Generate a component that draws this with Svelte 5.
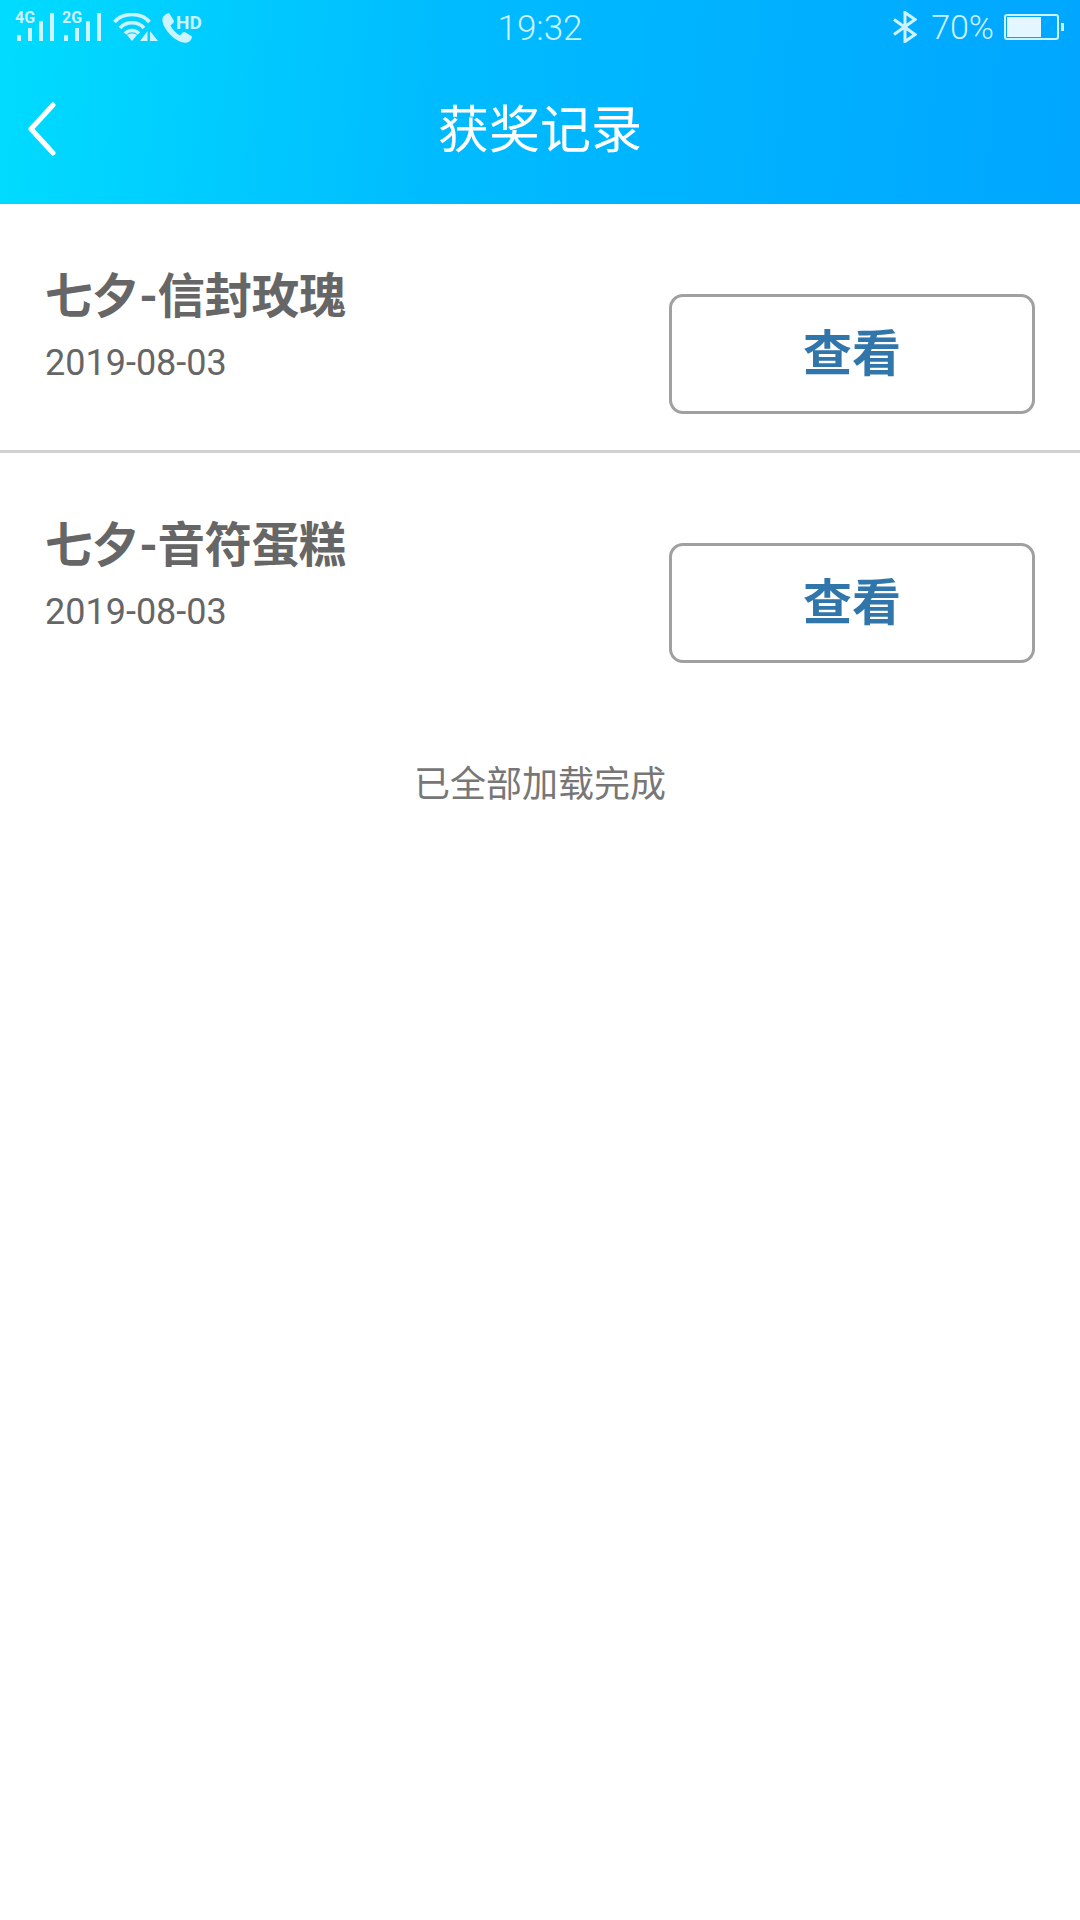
<script lang="ts">
	const records = [
		{ event: '七夕', gift: '信封玫瑰', date: '2019-08-03' },
		{ event: '七夕', gift: '音符蛋糕', date: '2019-08-03' }
	];
</script>

<div class="page">
	<header class="top">
		<div class="status">
			<div class="status-left">
				{#each ['4G', '2G'] as net}
					<div class="signal">
						<span class="net">{net}</span>
						<svg width="40" height="30" viewBox="0 0 40 30" fill="currentColor">
							<rect x="2" y="22" width="4" height="6" />
							<rect x="13" y="15" width="4" height="13" />
							<rect x="24" y="8" width="4" height="20" />
							<rect x="35" y="0" width="4" height="28" />
						</svg>
					</div>
				{/each}
				<svg class="wifi" width="46" height="30" viewBox="0 0 46 30" fill="none" stroke="currentColor" stroke-width="3.6">
					<path d="M1.500 9 C10 -1 28 -1 36.500 9" />
					<path d="M7 15 C13 8 25 8 31 15" />
					<path d="M12 20.500 C16 16.500 22 16.500 26 20.500" />
					<path d="M14 22 L19 28 L24 22 C21 20 17 20 14 22 Z" fill="currentColor" stroke="none" />
					<path d="M34.500 18 V28 H27 Z M37 18 V28 H45 Z" fill="currentColor" stroke="none" />
				</svg>
				<div class="call">
					<svg width="30" height="30" viewBox="0 0 30 30" fill="currentColor">
						<path d="M7 0 L11.500 7 C12.200 8.200 12 9.400 11 10.300 L8.500 12.500 C10.500 16.500 13.500 20 18 22.500 L20.500 19.800 C21.300 19 22.500 18.800 23.600 19.400 L29.800 23.200 C30.300 25 29 27.500 27 28.700 C24 30.500 19.500 29.800 15 27 C7.500 22.500 1 14 0.400 7.500 C0.100 4 3 1 7 0 Z" />
					</svg>
					<span class="hd">HD</span>
				</div>
			</div>
			<div class="time">19:32</div>
			<div class="status-right">
				<svg width="24" height="32" viewBox="0 0 24 32" fill="none" stroke="currentColor" stroke-width="3">
					<path d="M1 8.500 L22 23.500 L12 30.500 V1.500 L22 8.500 L1 23.500" />
				</svg>
				<span class="pct">70%</span>
				<div class="battery-wrap">
					<div class="battery"><div class="level" style="width: 70%"></div></div>
					<div class="nub"></div>
				</div>
			</div>
		</div>
		<div class="titlebar">
			<svg class="back" width="30" height="54" viewBox="0 0 30 54" fill="none" stroke="#fff" stroke-width="5" stroke-linecap="round" stroke-linejoin="round">
				<path d="M26 3 L4 27 L26 51" />
			</svg>
			<h1>获奖记录</h1>
		</div>
	</header>

	<main>
		{#each records as record}
			<div class="row">
				<div class="info">
					<div class="name">{record.event}-{record.gift}</div>
					<div class="date">{record.date}</div>
				</div>
				<button class="view">查看</button>
			</div>
		{/each}
		<div class="done">已全部加载完成</div>
	</main>
</div>

<style>
	:global(body) {
		margin: 0;
		background: #fff;
	}

	.page {
		width: 1080px;
		min-height: 1920px;
		background: #fff;
		font-family: Roboto, "Noto Sans CJK SC", sans-serif;
	}

	.top {
		height: 204px;
		background: linear-gradient(95deg, #00dcff 0%, #00bcff 40%, #00a6ff 100%);
	}

	.status {
		height: 60px;
		display: grid;
		grid-template-columns: 1fr auto 1fr;
		align-items: start;
		color: #cdf3ff;
	}

	.status-left {
		display: flex;
		align-items: flex-start;
		padding: 13px 0 0 15px;
		height: 47px;
		box-sizing: border-box;
	}

	.signal {
		position: relative;
		width: 47px;
		height: 30px;
	}

	.net {
		position: absolute;
		left: 0;
		top: -3px;
		font: 700 16px/16px Roboto, sans-serif;
	}

	.wifi {
		margin-left: 4px;
	}

	.call {
		position: relative;
		margin-left: 3px;
		width: 44px;
	}

	.hd {
		position: absolute;
		left: 14px;
		top: 0;
		font: 700 19px/20px Roboto, sans-serif;
	}

	.time {
		font-size: 35px;
		font-weight: 300;
		line-height: 58px;
		text-align: center;
	}

	.status-right {
		display: flex;
		align-items: center;
		justify-content: flex-end;
		height: 54px;
		padding-right: 16px;
	}

	.pct {
		font-size: 34px;
		font-weight: 300;
		margin-left: 14px;
		line-height: 50px;
	}

	.battery-wrap {
		display: flex;
		align-items: center;
		margin-left: 10px;
	}

	.battery {
		width: 55px;
		height: 26px;
		box-sizing: border-box;
		border: 2px solid #cdf3ff;
		border-radius: 3px;
		padding: 1px;
	}

	.level {
		height: 100%;
		background: #e4f6ff;
	}

	.nub {
		width: 3px;
		height: 8px;
		margin-left: 2px;
		background: #cdf3ff;
	}

	.titlebar {
		position: relative;
		height: 144px;
		display: flex;
		align-items: center;
		justify-content: center;
	}

	.back {
		position: absolute;
		left: 27px;
		top: 42px;
	}

	h1 {
		margin: 0;
		font-size: 51px;
		font-weight: 400;
		color: #fff;
		position: relative;
		top: -6px;
	}

	.row {
		height: 246px;
		box-sizing: border-box;
		display: flex;
		justify-content: space-between;
		padding: 90px 45px 0;
	}

	.row:first-child {
		border-bottom: 3px solid #d2d2d2;
		height: 249px;
	}

	.info {
		margin-top: -32px;
	}

	.name {
		font-size: 47.500px;
		font-weight: 700;
		color: #666;
		line-height: 70px;
		letter-spacing: -0.4px;
	}

	.date {
		font-size: 36px;
		color: #666;
		line-height: 50px;
		margin-top: 6px;
	}

	.view {
		width: 366px;
		height: 120px;
		box-sizing: border-box;
		border: 3px solid #a0a0a0;
		border-radius: 14px;
		background: #fff;
		color: #3076ab;
		font-family: inherit;
		font-size: 49px;
		font-weight: 700;
		padding: 0 0 10px;
	}

	.done {
		margin-top: 61px;
		text-align: center;
		font-size: 36px;
		color: #777;
		line-height: 50px;
	}
</style>
